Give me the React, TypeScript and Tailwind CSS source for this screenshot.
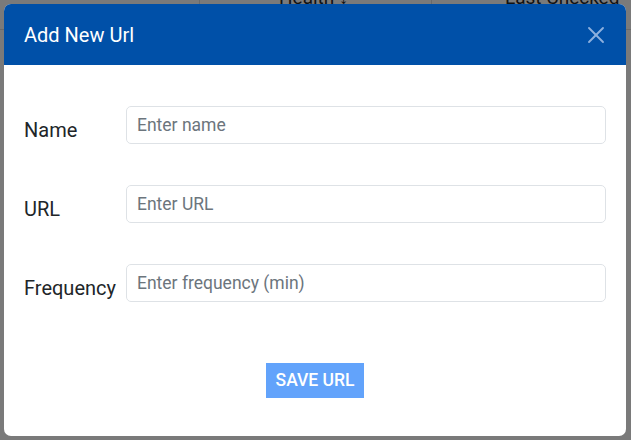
import { X } from 'lucide-react'

const fields = [
  { label: 'Name', placeholder: 'Enter name' },
  { label: 'URL', placeholder: 'Enter URL' },
  { label: 'Frequency', placeholder: 'Enter frequency (min)' },
]

export default function App() {
  return (
    <div
      className="relative w-[631px] h-[440px] overflow-hidden bg-[#7a7a7a]"
      style={{ fontFamily: 'Roboto, "Liberation Sans", sans-serif' }}
    >
      {/* table header behind the overlay */}
      <div className="flex h-[30px] border-b border-[#6a6a6a] text-[#111] text-[19px] leading-none">
        <div className="w-[200px] border-r border-[#6a6a6a]" />
        <div className="w-[232px] border-r border-[#6a6a6a] pl-[79px]">
          <span className="block -mt-[12px]">Health ↕</span>
        </div>
        <div className="flex-1 pl-[73px]">
          <span className="block -mt-[12px] whitespace-nowrap">Last Checked</span>
        </div>
      </div>

      {/* modal */}
      <div className="absolute left-[4px] top-[4px] w-[622px] h-[432px] bg-white rounded-[7px] overflow-hidden flex flex-col">
        <div className="h-[61px] bg-[#0050a8] flex items-center justify-between pl-5 pr-[16px]">
          <h2 className="text-white text-[20px] leading-none">Add New Url</h2>
          <X className="w-[28px] h-[28px] text-[#8db0de]" strokeWidth={1.6} />
        </div>

        <div className="flex flex-col gap-[41px] pt-[41px] px-5">
          {fields.map((f) => (
            <div key={f.label} className="flex items-center h-[38px]">
              <label className="w-[102px] text-[20px] leading-[20px] text-[#212529] mt-[10px] whitespace-nowrap">
                {f.label}
              </label>
              <input
                placeholder={f.placeholder}
                className="flex-1 h-[38px] rounded-[5px] border border-[#dee2e6] px-[10px] text-[17.5px] placeholder:text-[#6c757d] outline-none"
              />
            </div>
          ))}
        </div>

        <div className="flex justify-center mt-[61px]">
          <button className="h-[35px] px-[10px] bg-[#62a3fb] text-white text-[17.5px] font-medium">
            SAVE URL
          </button>
        </div>
      </div>
    </div>
  )
}
